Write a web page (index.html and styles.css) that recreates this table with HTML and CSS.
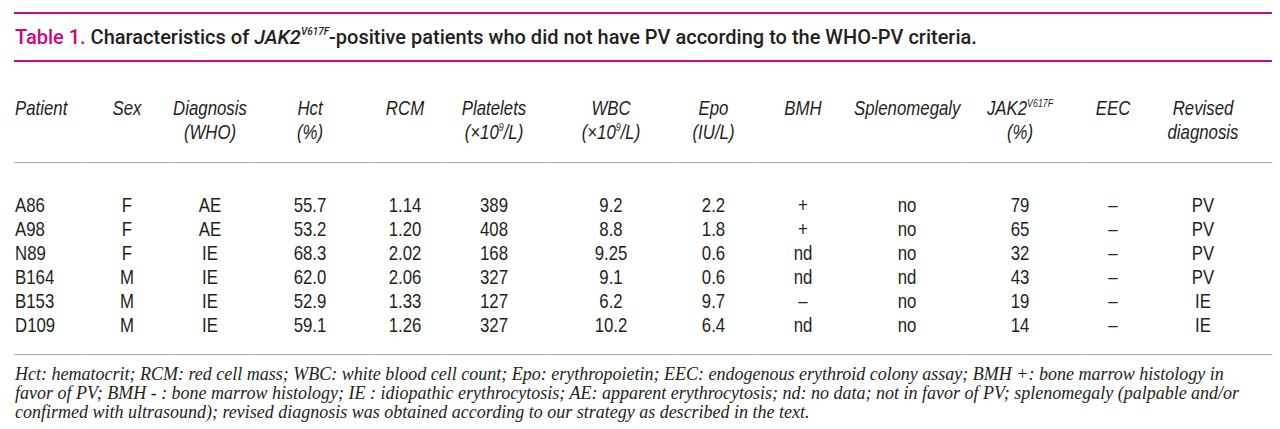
FILE: index.html
```html
<!DOCTYPE html>
<html lang="en">
<head>
<meta charset="utf-8">
<title>Table 1</title>
<link rel="stylesheet" href="styles.css">
</head>
<body>
<div class="figure">
  <div class="caption"><span class="label">Table 1.</span> Characteristics of <i>JAK2</i><sup class="mut">V617F</sup>-positive patients who did not have PV according to the WHO-PV criteria.</div>
  <div class="table-box">
    <table class="data">
      <colgroup>
        <col class="c-patient"><col class="c-sex"><col class="c-diag"><col class="c-hct"><col class="c-rcm"><col class="c-plt"><col class="c-wbc"><col class="c-epo"><col class="c-bmh"><col class="c-spl"><col class="c-jak"><col class="c-eec"><col class="c-rev">
      </colgroup>
      <thead>
        <tr>
          <th class="left">Patient</th>
          <th>Sex</th>
          <th>Diagnosis<br>(WHO)</th>
          <th>Hct<br>(%)</th>
          <th>RCM</th>
          <th>Platelets<br>(×10<sup class="exp">9</sup>/L)</th>
          <th>WBC<br>(×10<sup class="exp">9</sup>/L)</th>
          <th>Epo<br>(IU/L)</th>
          <th>BMH</th>
          <th>Splenomegaly</th>
          <th>JAK2<sup class="exp">V617F</sup><br>(%)</th>
          <th>EEC</th>
          <th class="last">Revised<br>diagnosis</th>
        </tr>
      </thead>
      <tbody>
        <tr class="first"><td class="left">A86</td><td>F</td><td>AE</td><td>55.7</td><td>1.14</td><td>389</td><td>9.2</td><td>2.2</td><td>+</td><td>no</td><td>79</td><td>–</td><td class="last">PV</td></tr>
        <tr><td class="left">A98</td><td>F</td><td>AE</td><td>53.2</td><td>1.20</td><td>408</td><td>8.8</td><td>1.8</td><td>+</td><td>no</td><td>65</td><td>–</td><td class="last">PV</td></tr>
        <tr><td class="left">N89</td><td>F</td><td>IE</td><td>68.3</td><td>2.02</td><td>168</td><td>9.25</td><td>0.6</td><td>nd</td><td>no</td><td>32</td><td>–</td><td class="last">PV</td></tr>
        <tr><td class="left">B164</td><td>M</td><td>IE</td><td>62.0</td><td>2.06</td><td>327</td><td>9.1</td><td>0.6</td><td>nd</td><td>nd</td><td>43</td><td>–</td><td class="last">PV</td></tr>
        <tr><td class="left">B153</td><td>M</td><td>IE</td><td>52.9</td><td>1.33</td><td>127</td><td>6.2</td><td>9.7</td><td>–</td><td>no</td><td>19</td><td>–</td><td class="last">IE</td></tr>
        <tr class="lastrow"><td class="left">D109</td><td>M</td><td>IE</td><td>59.1</td><td>1.26</td><td>327</td><td>10.2</td><td>6.4</td><td>nd</td><td>no</td><td>14</td><td>–</td><td class="last">IE</td></tr>
      </tbody>
    </table>
  </div>
  <p class="notes">Hct: hematocrit; RCM: red cell mass; WBC: white blood cell count; Epo: erythropoietin; EEC: endogenous erythroid colony assay; BMH +: bone marrow histology in<br>favor of PV; BMH - : bone marrow histology; IE : idiopathic erythrocytosis; AE: apparent erythrocytosis; nd: no data; not in favor of PV; splenomegaly (palpable and/or<br>confirmed with ultrasound); revised diagnosis was obtained according to our strategy as described in the text.</p>
</div>
</body>
</html>
```

FILE: styles.css
```css
html, body {
  margin: 0;
  padding: 0;
  background: #ffffff;
  overflow: hidden;
}

body {
  color: #231f20;
}

.figure {
  width: 1258px;
  margin-left: 14px;
  padding-top: 12px;
}

.caption {
  border-top: 2px solid #cf047f;
  border-bottom: 2px solid #cf047f;
  padding: 11px 0 11px 1px;
  font-family: Roboto, "Liberation Sans", sans-serif;
  font-weight: 500;
  font-size: 20px;
  line-height: 24px;
  white-space: nowrap;
}

.caption .label {
  color: #cf047f;
}

.caption i {
  font-style: italic;
}

.mut {
  font-style: italic;
  font-size: 10px;
  line-height: 0;
  vertical-align: 9px;
}

/* The table face is a condensed grotesque: Liberation Sans narrowed to 80%. */
.table-box {
  width: 1258px;
  height: 293px;
}

.data {
  width: 1572.5px;
  table-layout: fixed;
  border-collapse: collapse;
  transform: scaleX(0.8);
  transform-origin: 0 0;
  font-family: "Liberation Sans", Arial, sans-serif;
  font-size: 21px;
  line-height: 24px;
}

.c-patient { width: 88.75px; }
.c-sex { width: 105px; }
.c-diag { width: 102.5px; }
.c-hct { width: 147.5px; }
.c-rcm { width: 90px; }
.c-plt { width: 132.5px; }
.c-wbc { width: 160px; }
.c-epo { width: 96.25px; }
.c-bmh { width: 127.5px; }
.c-spl { width: 132.5px; }
.c-jak { width: 150px; }
.c-eec { width: 82.5px; }
.c-rev { width: 157.5px; }

.data th,
.data td {
  padding: 0;
  text-align: center;
  vertical-align: top;
  white-space: nowrap;
}

.data th {
  font-weight: normal;
  font-style: italic;
  padding-top: 34px;
  padding-bottom: 18px;
  border-bottom: 1px solid #a6a6a6;
}

.data .left {
  text-align: left;
  padding-left: 1.25px;
}

.data .last {
  padding-right: 15px;
}

.exp {
  font-size: 11px;
  line-height: 0;
  vertical-align: 8px;
}

.data tr.first td {
  padding-top: 30px;
}

.data tr.lastrow td {
  padding-bottom: 17px;
  border-bottom: 1px solid #a6a6a6;
}

.notes {
  margin: 0;
  padding: 10px 0 0 1px;
  font-family: "Liberation Serif", serif;
  font-style: italic;
  font-size: 18px;
  line-height: 19px;
  white-space: nowrap;
}
```
